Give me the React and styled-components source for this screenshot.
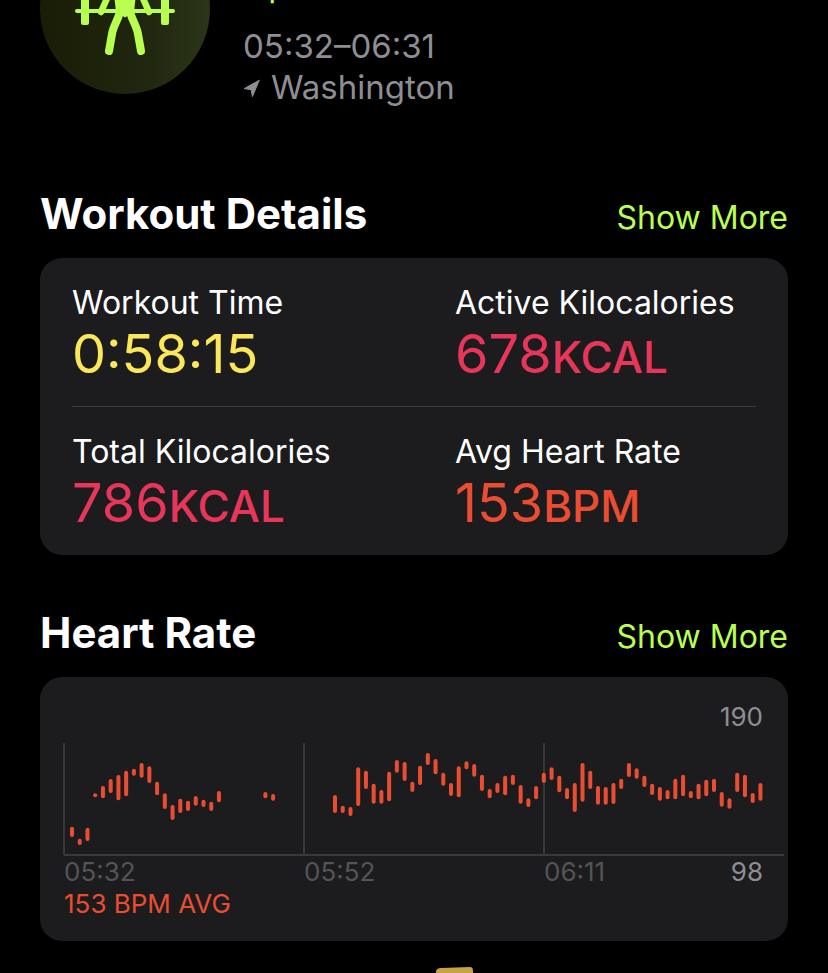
import styled, { createGlobalStyle } from "styled-components";

const GlobalStyle = createGlobalStyle`
  * {
    box-sizing: border-box;
    margin: 0;
    padding: 0;
  }

  body {
    background-color: #000;
    color: #fff;
    font-family: Inter, "Liberation Sans", sans-serif;
    overflow: hidden;
  }
`;

const Page = styled.main`
  padding: 0 40px;
`;

/* Header */
const StyledHeader = styled.header`
  display: flex;
  align-items: flex-end;
  gap: 33px;
  height: 112px;
  overflow: hidden;
`;

const Avatar = styled.div`
  flex-shrink: 0;
  width: 170px;
  height: 170px;
  margin-bottom: 18px;
  border-radius: 50%;
  background: linear-gradient(to right, #1a1d06, #20260f 60%, #2b3518);
  overflow: hidden;

  svg {
    display: block;
  }
`;

const HeaderText = styled.div`
  color: #8e8e93;
  font-size: 33px;
  line-height: 41px;
  padding-bottom: 4px;
`;

const Goal = styled.p`
  color: #b9ff4f;
  margin-bottom: 20px;
`;

const Place = styled.p`
  display: flex;
  align-items: center;
  gap: 10px;
`;

/* Sections */
const Section = styled.section`
  margin-top: ${(props) => props.$top}px;
`;

const SectionHeader = styled.div`
  display: flex;
  align-items: baseline;
  justify-content: space-between;
  margin-bottom: 16px;
`;

const Title = styled.h2`
  font-size: 42px;
  font-weight: 700;
  line-height: 56px;
`;

const ShowMore = styled.button`
  border: none;
  background: none;
  color: #b9ff4f;
  font-family: inherit;
  font-size: 32px;
  line-height: 40px;
  cursor: pointer;
`;

const Card = styled.div`
  background-color: #1c1c1e;
  border-radius: 22px;
`;

/* Stats */
const StatsCard = styled(Card)`
  padding: 0 32px;
`;

const StatsRow = styled.dl`
  display: grid;
  grid-template-columns: 1fr 1fr;
  column-gap: 82px;

  & + & {
    border-top: 1px solid #3d3d40;
  }
`;

const Stat = styled.div`
  padding: 25px 0 21px;
  white-space: nowrap;
`;

const StatLabel = styled.dt`
  font-size: 32px;
  line-height: 40px;
`;

const StatValue = styled.dd`
  color: ${(props) => props.$color};
  font-size: 54px;
  line-height: 62px;
`;

const Unit = styled.span`
  font-size: 44px;
  font-weight: 500;
  line-height: 1;
`;

/* Heart rate */
const ChartCard = styled(Card)`
  padding: 24px 4px 21px 24px;
  font-size: 26px;
  line-height: 32px;
`;

const Bound = styled.span`
  color: #8e8e93;
`;

const TopBound = styled.div`
  padding-right: 21px;
  margin-bottom: 10px;
  text-align: right;
`;

const Plot = styled.svg`
  display: block;
  width: 100%;
  overflow: visible;
`;

const TimeAxis = styled.div`
  display: grid;
  grid-template-columns: repeat(3, 1fr);
  color: #545456;
`;

const Tick = styled.div`
  display: flex;
  justify-content: space-between;
  padding-right: 21px;
`;

const Average = styled.p`
  color: #eb4d32;
`;

const BadgeRow = styled.div`
  display: flex;
  justify-content: center;
  padding: 25px 0 0 82px;
`;

// [slot, top, bottom] of every sample, measured down from the top of the plot
const samples = [
  [0, 83.7, 94], [1, 95.7, 102], [2, 84.7, 98], [3, 50.3, 54.3],
  [4, 43, 55.3], [5, 36, 50], [6, 32, 57.3], [7, 27.7, 53.3],
  [8, 25.7, 32.7], [9, 20, 34.7], [10, 23.3, 40], [11, 38.7, 52.3],
  [12, 50.3, 66], [13, 62, 77], [14, 55.7, 70], [15, 57.7, 68],
  [16, 53, 62.7], [17, 56.7, 64], [18, 58.7, 68], [19, 48, 59.3],
  [25, 49, 55.3], [26, 51, 57.7], [34, 52, 70], [35, 62.7, 70],
  [36, 64, 73], [37, 24.3, 63], [38, 27.7, 46], [39, 40.7, 60.7],
  [40, 47, 60.7], [41, 28.7, 58.3], [42, 17, 29.7], [43, 19, 38],
  [44, 38.7, 49], [45, 22.7, 42], [46, 10, 22], [47, 16, 31.3],
  [48, 29.7, 42.7], [49, 40, 53], [50, 23.3, 54.3], [51, 18.3, 26.3],
  [52, 21, 33.7], [53, 31.7, 48], [54, 46, 55.3], [55, 40, 50],
  [56, 32.7, 52.3], [57, 31.7, 42], [58, 42, 60.7], [59, 55.3, 64],
  [60, 43, 56.3], [61, 29.7, 40], [62, 24.3, 37], [63, 32.7, 49.3],
  [64, 45, 56.3], [65, 40, 69], [66, 20, 58.7], [67, 27.7, 46],
  [68, 43, 61.7], [69, 44, 61.7], [70, 40, 61], [71, 35.7, 46],
  [72, 20, 34], [73, 25.3, 35.7], [74, 32.7, 44], [75, 40.7, 52],
  [76, 44, 57.7], [77, 47, 56.3], [78, 35.7, 56.3], [79, 31.7, 53.3],
  [80, 48, 55.3], [81, 40.7, 56.3], [82, 36.7, 53.3], [83, 35.7, 49],
  [84, 49, 63.7], [85, 55.3, 65.7], [86, 29.7, 49], [87, 31.7, 54.3],
  [88, 50, 60], [89, 40, 57.7],
];

const SLOT = 7.735;

function LifterIcon() {
  return (
    <svg
      width="170"
      height="170"
      viewBox="0 0 170 170"
      fill="none"
      stroke="#b9ff4f"
      strokeLinecap="round"
      strokeLinejoin="round"
      aria-hidden="true"
    >
      <circle cx="85" cy="38" r="9" fill="#b9ff4f" stroke="none" />
      <path d="M37 87H133" strokeWidth="4" />
      <path
        d="M41 75h8v24a2 2 0 0 1-2 2h-4a2 2 0 0 1-2-2z"
        fill="#b9ff4f"
        stroke="none"
      />
      <path
        d="M121 75h8v24a2 2 0 0 1-2 2h-4a2 2 0 0 1-2-2z"
        fill="#b9ff4f"
        stroke="none"
      />
      <path d="M76 54L61 88M94 54L109 88" strokeWidth="6.5" />
      <path
        d="M72 52H98L94 88L85 93.5L76 88Z"
        fill="#b9ff4f"
        stroke="none"
      />
      <path
        d="M80 88C77 98 73 103 72 110L69 127M90 88C93 98 97 103 98 110L101 127"
        strokeWidth="8"
      />
    </svg>
  );
}

function LocationIcon() {
  return (
    <svg width="18" height="20" viewBox="0 0 18 20" aria-hidden="true">
      <path
        d="M16.3 2.2L1.2 10.6L8.2 11.7L9.4 18.6Z"
        fill="#8e8e93"
        stroke="#8e8e93"
        strokeLinejoin="round"
      />
    </svg>
  );
}

function HeartRatePlot() {
  return (
    <Plot viewBox="0 0 720 113" role="img" aria-label="Heart rate">
      <g stroke="#3a3a3c" strokeWidth="1.8">
        <path d="M0 0V112M240 0V112M480 0V112M0 112H720" />
      </g>
      {samples.map(([slot, top, bottom]) => (
        <rect
          key={slot}
          x={6 + slot * SLOT}
          y={top}
          width="4"
          height={bottom - top}
          rx="2"
          fill="#eb4d32"
        />
      ))}
    </Plot>
  );
}

function StatItem({ label, value, unit, color }) {
  return (
    <Stat>
      <StatLabel>{label}</StatLabel>
      <StatValue $color={color}>
        {value}
        {unit && <Unit>{unit}</Unit>}
      </StatValue>
    </Stat>
  );
}

function App() {
  return (
    <>
      <GlobalStyle />
      <Page>
        <StyledHeader>
          <Avatar>
            <LifterIcon />
          </Avatar>
          <HeaderText>
            <Goal>Open Goal</Goal>
            <p>05:32–06:31</p>
            <Place>
              <LocationIcon />
              Washington
            </Place>
          </HeaderText>
        </StyledHeader>

        <Section $top={74}>
          <SectionHeader>
            <Title>Workout Details</Title>
            <ShowMore>Show More</ShowMore>
          </SectionHeader>
          <StatsCard>
            <StatsRow>
              <StatItem label="Workout Time" value="0:58:15" color="#fbe75a" />
              <StatItem
                label="Active Kilocalories"
                value="678"
                unit="KCAL"
                color="#e8365a"
              />
            </StatsRow>
            <StatsRow>
              <StatItem
                label="Total Kilocalories"
                value="786"
                unit="KCAL"
                color="#e8365a"
              />
              <StatItem
                label="Avg Heart Rate"
                value="153"
                unit="BPM"
                color="#eb4d32"
              />
            </StatsRow>
          </StatsCard>
        </Section>

        <Section $top={50}>
          <SectionHeader>
            <Title>Heart Rate</Title>
            <ShowMore>Show More</ShowMore>
          </SectionHeader>
          <ChartCard>
            <TopBound>
              <Bound>190</Bound>
            </TopBound>
            <HeartRatePlot />
            <TimeAxis>
              <Tick>05:32</Tick>
              <Tick>05:52</Tick>
              <Tick>
                06:11
                <Bound>98</Bound>
              </Tick>
            </TimeAxis>
            <Average>153 BPM AVG</Average>
          </ChartCard>
        </Section>

        <BadgeRow>
          <svg width="38" height="44" viewBox="0 0 38 44" aria-hidden="true">
            <path d="M0 44V5Q1 2 5 2L34 1Q37 1 37 5L38 44Z" fill="#c4a443" />
          </svg>
        </BadgeRow>
      </Page>
    </>
  );
}

export default App;
